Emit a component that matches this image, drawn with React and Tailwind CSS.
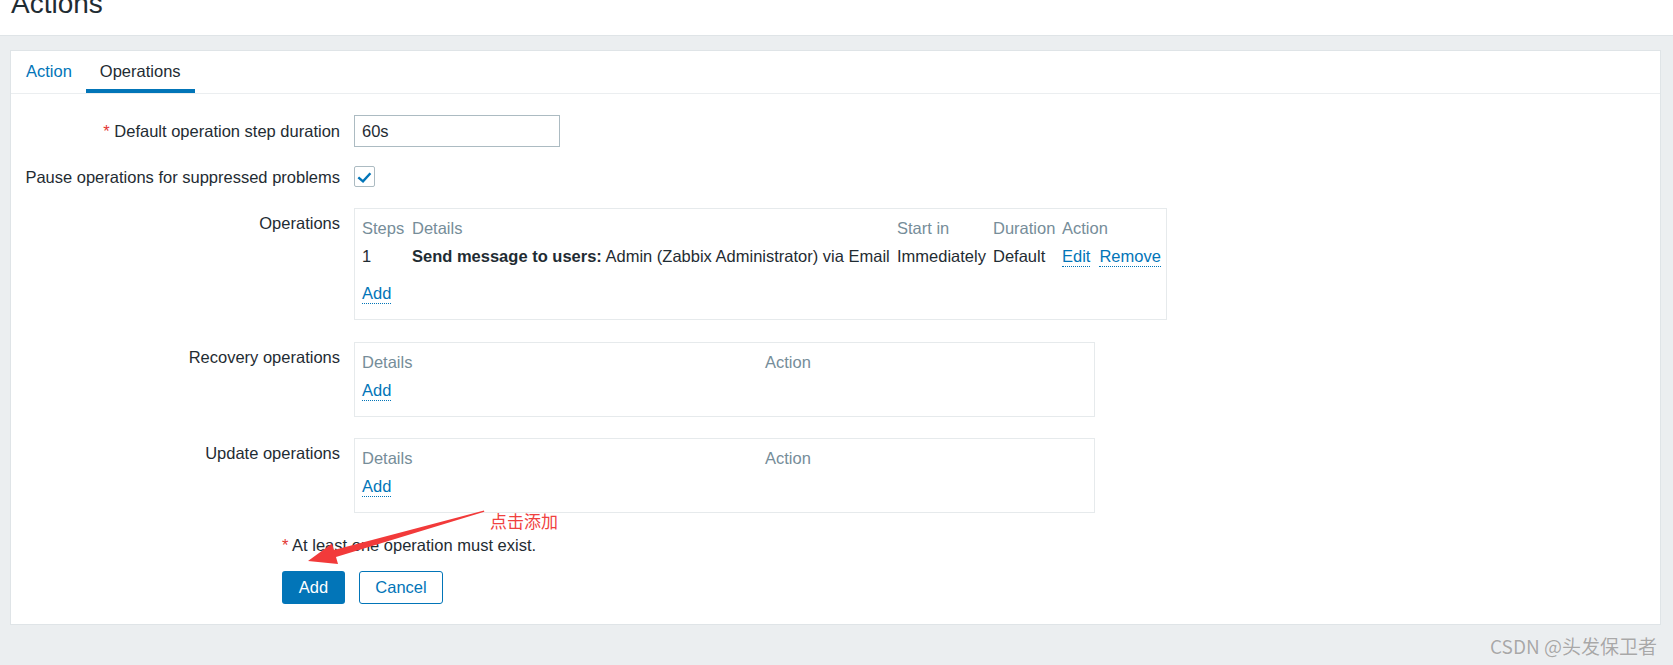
import React from 'react';

const Label = ({ children, top }) => (
  <div className={`w-[329px] shrink-0 text-right leading-[20px] ${top ? 'pt-[5px]' : ''}`}>{children}</div>
);

const DotLink = ({ children }) => (
  <span className="inline-block leading-[20px] text-[#0275b8] border-b border-dotted border-[#0275b8]">{children}</span>
);

export default function App() {
  return (
    <div className="relative w-[1673px] h-[665px] overflow-hidden bg-[#ebeef0] font-['Liberation_Sans',Arial,sans-serif] text-[16.5px] text-[#1f2c33]">
      {/* page header */}
      <div className="h-[36px] bg-white border-b border-[#dfe4e7] overflow-hidden">
        <h1 className="-mt-[10px] ml-[11px] text-[28px] leading-[28px]">Actions</h1>
      </div>

      {/* card */}
      <div className="mt-[14px] ml-[10px] w-[1651px] h-[575px] bg-white border border-[#dfe4e7]">
        {/* tabs */}
        <div className="flex h-[43px] border-b border-[#ebeef0] pl-[1px]">
          <div className="h-[42px] px-[14px] pt-[3px] border-b-4 border-transparent flex items-center text-[#0275b8]">Action</div>
          <div className="h-[42px] px-[14px] pt-[3px] border-b-4 border-[#0275b8] flex items-center">Operations</div>
        </div>

        {/* form */}
        <div className="flex items-center mt-[21px]">
          <Label>
            <span className="text-[#e33734]">*</span> Default operation step duration
          </Label>
          <div className="ml-[14px] w-[206px] h-[32px] border border-[#acbbc2] flex items-center pl-[7px]">60s</div>
        </div>

        <div className="flex items-center mt-[19px]">
          <Label>Pause operations for suppressed problems</Label>
          <div className="ml-[14px] w-[21px] h-[21px] border border-[#acbbc2] rounded-[2px] flex items-center justify-center">
            <svg width="21" height="21" viewBox="0 0 21 21" className="-m-px">
              <polyline points="4.3,11.3 9,15.3 16.4,7.2" fill="none" stroke="#0275b8" strokeWidth="2.4" />
            </svg>
          </div>
        </div>

        <div className="flex mt-[21px]">
          <Label top>Operations</Label>
          <div className="ml-[14px] w-[813px] h-[112px] border border-[#e6eaec] pl-[7px] pt-[5px]">
            <div className="grid grid-cols-[50px_485px_96px_69px_1fr] h-[28px] items-center text-[#768d99]">
              <span>Steps</span>
              <span>Details</span>
              <span>Start in</span>
              <span>Duration</span>
              <span>Action</span>
            </div>
            <div className="grid grid-cols-[50px_485px_96px_69px_1fr] h-[28px] items-center whitespace-nowrap">
              <span>1</span>
              <span>
                <b>Send message to users:</b> Admin (Zabbix Administrator) via Email
              </span>
              <span>Immediately</span>
              <span>Default</span>
              <span className="flex gap-[9px]">
                <DotLink>Edit</DotLink>
                <DotLink>Remove</DotLink>
              </span>
            </div>
            <div className="mt-[9px] h-[28px] flex items-center">
              <DotLink>Add</DotLink>
            </div>
          </div>
        </div>

        <div className="flex mt-[22px]">
          <Label top>Recovery operations</Label>
          <div className="ml-[14px] w-[741px] h-[75px] border border-[#e6eaec] pl-[7px] pt-[5px]">
            <div className="grid grid-cols-[403px_1fr] h-[28px] items-center text-[#768d99]">
              <span>Details</span>
              <span>Action</span>
            </div>
            <div className="h-[28px] flex items-center">
              <DotLink>Add</DotLink>
            </div>
          </div>
        </div>

        <div className="flex mt-[21px]">
          <Label top>Update operations</Label>
          <div className="ml-[14px] w-[741px] h-[75px] border border-[#e6eaec] pl-[7px] pt-[5px]">
            <div className="grid grid-cols-[403px_1fr] h-[28px] items-center text-[#768d99]">
              <span>Details</span>
              <span>Action</span>
            </div>
            <div className="h-[28px] flex items-center">
              <DotLink>Add</DotLink>
            </div>
          </div>
        </div>

        <div className="pl-[271px]">
          <div className="mt-[22px] leading-[20px]">
            <span className="text-[#e33734]">*</span> At least one operation must exist.
          </div>
          <div className="mt-[16px] flex gap-[14px]">
            <button className="w-[63px] h-[33px] rounded-[3px] bg-[#0275b8] text-white">Add</button>
            <button className="w-[84px] h-[33px] rounded-[3px] border border-[#0275b8] bg-white text-[#0275b8]">Cancel</button>
          </div>
        </div>
      </div>

      {/* annotation */}
      <div className="absolute left-[490px] top-[511px] leading-[20px] text-[17px] text-[#f0413f] font-['Noto_Sans_CJK_SC',sans-serif]">
        点击添加
      </div>
      <svg className="absolute left-0 top-0 pointer-events-none" width="1673" height="665">
        <polygon
          points="308,561 332,543.5 334,550 484,510.5 484.3,511.7 336,557 338,564"
          fill="#f23a3a"
        />
      </svg>

      {/* watermark */}
      <div className="absolute right-[16px] top-[636px] leading-[20px] text-[19px] text-[#a8a8a8] font-['Noto_Sans_CJK_SC',sans-serif] [text-shadow:0_0_1px_#ffffff]">
        CSDN @头发保卫者
      </div>
    </div>
  );
}
